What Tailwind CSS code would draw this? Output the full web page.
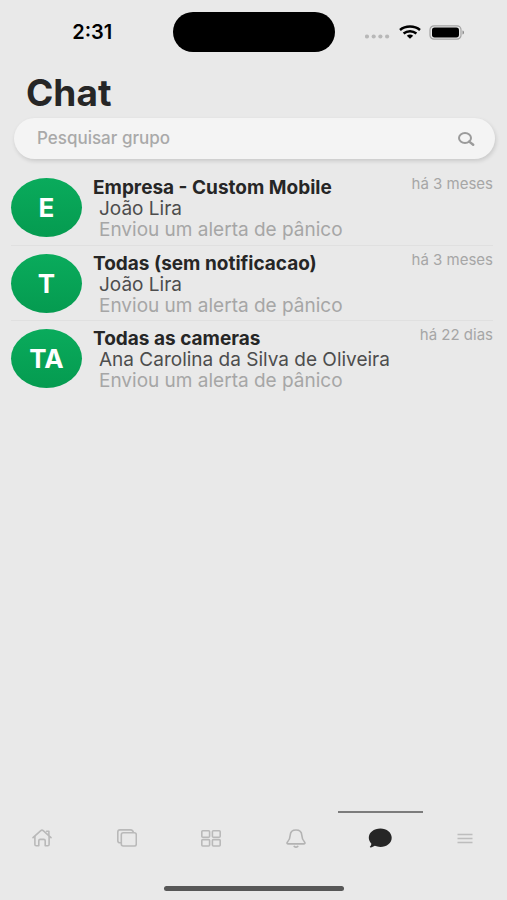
<!DOCTYPE html>
<html lang="pt-BR">
<head>
    <meta charset="UTF-8">
    <meta name="viewport" content="width=device-width, initial-scale=1.0">
    <title>Chat</title>
    <script src="https://cdn.jsdelivr.net/npm/@tailwindcss/browser@4"></script>
</head>
<body class="min-h-screen flex flex-col bg-[#e9e9e9] font-['Inter','Liberation_Sans',sans-serif] text-[#262626]">
    <!-- status bar -->
    <div class="grid grid-cols-[1fr_auto_1fr] items-center h-16 px-3">
        <span class="justify-self-center text-xl font-semibold text-black">2:31</span>
        <div class="w-[162px] h-10 rounded-full bg-black"></div>
        <div class="flex items-center justify-center gap-2">
            <svg class="mt-2" width="26" height="5" viewBox="0 0 26 5" fill="#b8b8b8">
                <circle cx="2" cy="2.5" r="2.1"/><circle cx="8.7" cy="2.5" r="2.1"/><circle cx="15.4" cy="2.5" r="2.1"/><circle cx="22.1" cy="2.5" r="2.1"/>
            </svg>
            <svg width="22" height="14" viewBox="0 0 22 14" fill="none" stroke="#000" stroke-width="2.5">
                <path d="M1 5C6.5.4 15.5.4 21 5"/>
                <path d="M4.6 8.5c3.7-3 9.1-3 12.8 0"/>
                <path d="M7.8 10.8c2-1.6 4.4-1.6 6.4 0L11 13.8z" fill="#000" stroke="none"/>
            </svg>
            <svg width="36" height="15" viewBox="0 0 36 15">
                <rect x="1" y=".8" width="31" height="13.4" rx="4" fill="none" stroke="#a3a3a3" stroke-width="1.2"/>
                <rect x="3" y="2.6" width="27" height="9.8" rx="2.6" fill="#000"/>
                <path d="M33.5 5.5c2 .6 2 3.4 0 4z" fill="#8a8a8a"/>
            </svg>
        </div>
    </div>

    <main class="flex-1">
        <h1 class="pl-[26px] pt-3 text-[37px] leading-[34px] font-bold">Chat</h1>

        <form class="flex items-center h-[41px] mt-2 ml-[14px] mr-3 pl-[23px] pr-5 rounded-full bg-[#f4f4f4] shadow-[1px_2px_4px_rgba(0,0,0,0.14)]">
            <input type="search" aria-label="Pesquisar grupo" placeholder="Pesquisar grupo" class="flex-1 min-w-0 bg-transparent outline-none text-[17px] font-medium placeholder:text-[#a9a9a9]">
            <button type="submit" aria-label="Pesquisar">
                <svg width="17" height="14" viewBox="0 0 17 14" fill="none" stroke="#9b9b9b" stroke-width="2">
                    <ellipse cx="7" cy="6" rx="6" ry="5"/>
                    <path d="M11.2 9.6l4 3.2" stroke-width="2.4" stroke-linecap="round"/>
                </svg>
            </button>
        </form>

        <ul class="mt-[11px] ml-[11px] mr-[14px]">
            <li class="h-[75px]">
                <a href="#" class="flex items-start pt-2">
                    <span class="flex items-center justify-center w-[71px] h-[59px] rounded-[50%] bg-linear-to-b from-[#0aab5c] to-[#059b50] text-white text-[26px] font-bold">E</span>
                    <div class="flex-1 min-w-0 pl-[11px]">
                        <div class="flex justify-between h-5">
                            <h2 class="text-[19px] leading-[19px] font-bold">Empresa - Custom Mobile</h2>
                            <time class="text-[15px] leading-3 text-[#a6a6a6]">há 3 meses</time>
                        </div>
                        <p class="pl-[6px] text-[19px] leading-[21px] text-[#4d4d4d]">João Lira</p>
                        <p class="pl-[6px] text-[19px] leading-[21px] text-[#a6a6a6]">Enviou um alerta de pânico</p>
                    </div>
                </a>
            </li>
            <li class="h-[75px] border-t border-[#e0e0e0]">
                <a href="#" class="flex items-start pt-2">
                    <span class="flex items-center justify-center w-[71px] h-[59px] rounded-[50%] bg-linear-to-b from-[#0aab5c] to-[#059b50] text-white text-[26px] font-bold">T</span>
                    <div class="flex-1 min-w-0 pl-[11px]">
                        <div class="flex justify-between h-5">
                            <h2 class="text-[19px] leading-[19px] font-bold">Todas (sem notificacao)</h2>
                            <time class="text-[15px] leading-3 text-[#a6a6a6]">há 3 meses</time>
                        </div>
                        <p class="pl-[6px] text-[19px] leading-[21px] text-[#4d4d4d]">João Lira</p>
                        <p class="pl-[6px] text-[19px] leading-[21px] text-[#a6a6a6]">Enviou um alerta de pânico</p>
                    </div>
                </a>
            </li>
            <li class="h-[75px] border-t border-[#e0e0e0]">
                <a href="#" class="flex items-start pt-2">
                    <span class="flex items-center justify-center w-[71px] h-[59px] rounded-[50%] bg-linear-to-b from-[#0aab5c] to-[#059b50] text-white text-[26px] font-bold">TA</span>
                    <div class="flex-1 min-w-0 pl-[11px]">
                        <div class="flex justify-between h-5">
                            <h2 class="text-[19px] leading-[19px] font-bold">Todas as cameras</h2>
                            <time class="text-[15px] leading-3 text-[#a6a6a6]">há 22 dias</time>
                        </div>
                        <p class="pl-[6px] text-[19px] leading-[21px] text-[#4d4d4d]">Ana Carolina da Silva de Oliveira</p>
                        <p class="pl-[6px] text-[19px] leading-[21px] text-[#a6a6a6]">Enviou um alerta de pânico</p>
                    </div>
                </a>
            </li>
        </ul>
    </main>

    <!-- bottom tabs -->
    <nav class="grid grid-cols-6 h-[52px]">
        <a href="#" aria-label="Início" class="flex items-center justify-center border-t-2 border-transparent">
            <svg width="20" height="18" viewBox="0 0 20 18" fill="none" stroke="#b9b9b9" stroke-width="1.6" stroke-linejoin="round" stroke-linecap="round">
                <path d="M1 8.6L8.8 1.7c.7-.6 1.7-.6 2.4 0L19 8.6M14.6 2.2h2.3v4"/>
                <path d="M2.9 7.5v8c0 .8.5 1.3 1.3 1.3h2.6v-5c0-.9.6-1.4 1.4-1.4h3.6c.8 0 1.4.5 1.4 1.4v5h2.6c.8 0 1.3-.5 1.3-1.3v-8"/>
            </svg>
        </a>
        <a href="#" aria-label="Álbuns" class="flex items-center justify-center border-t-2 border-transparent">
            <svg width="20" height="18" viewBox="0 0 20 18" fill="none" stroke="#b9b9b9" stroke-width="1.6" stroke-linejoin="round">
                <rect x="4.3" y="3.7" width="15" height="13.3" rx="2"/>
                <path d="M4.3 13.8H3c-1.3 0-2.2-.8-2.2-2V3c0-1.2.9-2.1 2.2-2.1h10.5c1.6 0 2.7 1.2 2.9 2.8"/>
            </svg>
        </a>
        <a href="#" aria-label="Painel" class="flex items-center justify-center border-t-2 border-transparent">
            <svg width="20" height="17" viewBox="0 0 20 17" fill="none" stroke="#b9b9b9" stroke-width="1.6">
                <rect x=".8" y=".8" width="7.8" height="6.4" rx="1"/><rect x="11.4" y=".8" width="7.8" height="6.4" rx="1"/>
                <rect x=".8" y="9.6" width="7.8" height="6.4" rx="1"/><rect x="11.4" y="9.6" width="7.8" height="6.4" rx="1"/>
            </svg>
        </a>
        <a href="#" aria-label="Notificações" class="flex items-center justify-center border-t-2 border-transparent">
            <svg width="20" height="19" viewBox="0 0 20 19" fill="none" stroke="#b3b3b3" stroke-width="1.6" stroke-linejoin="round" stroke-linecap="round">
                <path d="M10 1C6.5 1 4.4 3.3 4.2 6.2C4 9.5 3.7 10.8 1.5 13c-.9 1-.4 1.9.8 1.9h15.4c1.2 0 1.7-.9.8-1.9c-2.2-2.2-2.5-3.5-2.7-6.8C15.6 3.3 13.5 1 10 1z"/>
                <path d="M8.2 17.4c1 .8 2.6.8 3.6 0"/>
            </svg>
        </a>
        <a href="#" aria-label="Chat" aria-current="page" class="flex items-center justify-center border-t-2 border-[#7c7c7c]">
            <svg width="24" height="20" viewBox="0 0 24 20" fill="#262626">
                <path d="M12.4.5C5.9.5.8 4.5.8 9.8c0 2.2.9 4.2 2.5 5.7c.1 1.3-.5 2.2-1.3 3.1c-.3.5 0 .9.6.8c1.5-.1 3-.7 4.2-1.6c1.7.7 3.6 1.2 5.6 1.2c6.4 0 11.3-4 11.3-9.2S18.8.5 12.4.5z"/>
            </svg>
        </a>
        <a href="#" aria-label="Menu" class="flex items-center justify-center border-t-2 border-transparent">
            <svg width="16" height="11" viewBox="0 0 16 11" stroke="#bdbdbd" stroke-width="1.4">
                <path d="M.5 1.5h15M.5 5.5h15M.5 9.5h15"/>
            </svg>
        </a>
    </nav>
    <div class="flex justify-center pt-[23px] pb-[9px]">
        <div class="w-[180px] h-[5px] rounded-full bg-[#575757]"></div>
    </div>
</body>
</html>
